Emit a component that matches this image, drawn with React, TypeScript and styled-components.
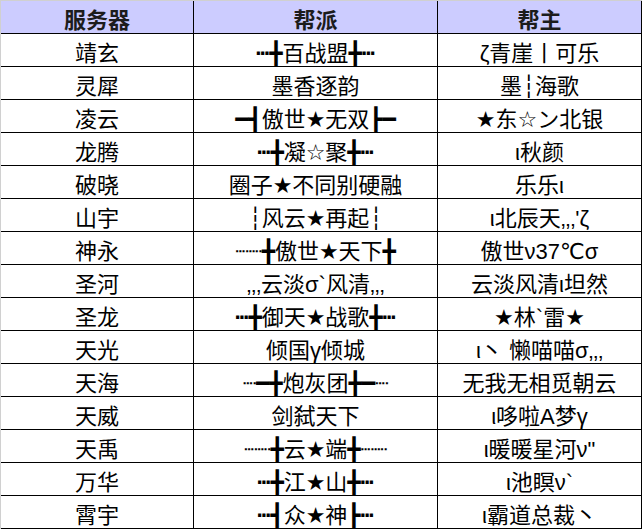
import React, { FC } from 'react';
import styled, { createGlobalStyle } from 'styled-components';

const GlobalStyle = createGlobalStyle`
  html, body {
    margin: 0;
    padding: 0;
    background: #ffffff;
  }
  body {
    font-family: "Liberation Sans", "DejaVu Sans", "Noto Sans CJK SC", sans-serif;
  }
`;

interface IGuildRow {
  server: string;
  guild: string;
  leader: string;
}

const rows: IGuildRow[] = [
  { server: '靖玄', guild: '┅╋百战盟╋┅', leader: 'ζ青崖丨可乐' },
  { server: '灵犀', guild: '墨香逐韵', leader: '墨┆海歌' },
  { server: '凌云', guild: '━┫傲世★无双┣━', leader: '★东☆ン北银' },
  { server: '龙腾', guild: '┅╋凝☆聚╋┅', leader: 'ι秋颜' },
  { server: '破晓', guild: '圈子★不同别硬融', leader: '乐乐ι' },
  { server: '山宇', guild: '┆风云★再起┆', leader: 'ι北辰天‚‚‚\'ζ' },
  { server: '神永', guild: '┈┈╋傲世★天下╋', leader: '傲世ν37℃σ' },
  { server: '圣河', guild: '‚‚‚云淡σ`风清‚‚‚', leader: '云淡风清ι坦然' },
  { server: '圣龙', guild: '┅╋御天★战歌╋┅', leader: '★林`雷★' },
  { server: '天光', guild: '倾国γ倾城', leader: 'ι丶 懒喵喵σ‚‚‚' },
  { server: '天海', guild: '┈━╋炮灰团╋━┈', leader: '无我无相觅朝云' },
  { server: '天威', guild: '剑弑天下', leader: 'ι哆啦A梦γ' },
  { server: '天禹', guild: '┈┈╋云★端╋┈┈', leader: 'ι暖暖星河ν"' },
  { server: '万华', guild: '┅╋江★山╋┅', leader: 'ι池瞑ν`' },
  { server: '霄宇', guild: '┅┫众★神┣┅', leader: 'ι霸道总裁丶' },
];

const Sheet = styled.div`
  display: grid;
  grid-template-columns: 193px 244px 204px;
  width: 642px;
  box-sizing: border-box;
  border-left: 1px solid #d0d0d0;
  border-top: 1px solid #d0d0d0;
`;

const Cell = styled.div`
  box-sizing: border-box;
  height: 33px;
  padding-top: 1px;
  display: flex;
  align-items: center;
  justify-content: center;
  border-right: 1px solid #000;
  border-bottom: 1px solid #000;
  font-size: 22px;
  color: #000;
  white-space: nowrap;
  overflow: hidden;
`;

const HeaderCell = styled(Cell)`
  background: #ccccff;
  font-weight: 700;
  color: #1c1c1c;
`;

const App: FC = () => {
  return (
    <>
      <GlobalStyle />
      <Sheet>
        <HeaderCell>服务器</HeaderCell>
        <HeaderCell>帮派</HeaderCell>
        <HeaderCell>帮主</HeaderCell>
        {rows.map(row => (
          <React.Fragment key={row.server}>
            <Cell>{row.server}</Cell>
            <Cell>{row.guild}</Cell>
            <Cell>{row.leader}</Cell>
          </React.Fragment>
        ))}
      </Sheet>
    </>
  );
};

export default App;
